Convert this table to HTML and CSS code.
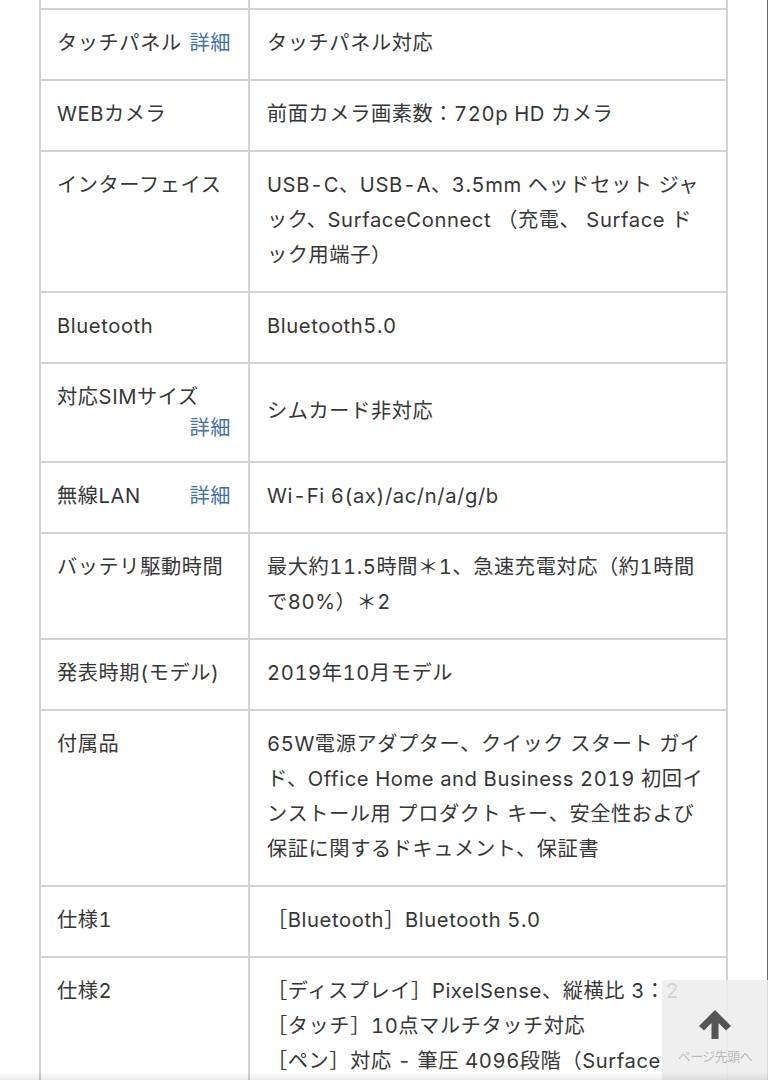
FILE: index.html
```html
<!DOCTYPE html>
<html lang="ja">
<head>
<meta charset="utf-8">
<title>スペック表</title>
<link rel="stylesheet" href="styles.css">
</head>
<body>
<div class="page">
  <table class="spec">
    <colgroup><col class="col-head"><col class="col-body"></colgroup>
    <tbody>
      <tr class="cut"><th></th><td></td></tr>
      <tr>
        <th><div class="label"><span>タッチパネル</span><a class="more" href="#">詳細</a></div></th>
        <td>タッチパネル対応</td>
      </tr>
      <tr>
        <th>WEBカメラ</th>
        <td>前面カメラ画素数：720p HD カメラ</td>
      </tr>
      <tr>
        <th>インターフェイス</th>
        <td>USB-C、USB-A、3.5mm ヘッドセット ジャック、SurfaceConnect （充電、 Surface ドック用端子）</td>
      </tr>
      <tr>
        <th>Bluetooth</th>
        <td>Bluetooth5.0</td>
      </tr>
      <tr>
        <th><div class="label"><span>対応SIMサイズ</span><a class="more wrap" href="#">詳細</a></div></th>
        <td>シムカード非対応</td>
      </tr>
      <tr>
        <th><div class="label"><span>無線LAN</span><a class="more" href="#">詳細</a></div></th>
        <td>Wi-Fi 6(ax)/ac/n/a/g/b</td>
      </tr>
      <tr>
        <th>バッテリ駆動時間</th>
        <td>最大約11.5時間＊1、急速充電対応（約1時間で80%）＊2</td>
      </tr>
      <tr>
        <th>発表時期(モデル)</th>
        <td>2019年10月モデル</td>
      </tr>
      <tr>
        <th>付属品</th>
        <td>65W電源アダプター、クイック スタート ガイド、Office Home and Business 2019 初回インストール用 プロダクト キー、安全性および保証に関するドキュメント、保証書</td>
      </tr>
      <tr>
        <th>仕様1</th>
        <td>［Bluetooth］Bluetooth 5.0</td>
      </tr>
      <tr>
        <th>仕様2</th>
        <td>［ディスプレイ］PixelSense、縦横比 3：2<br>［タッチ］10点マルチタッチ対応<br>［ペン］対応 - 筆圧 4096段階（Surface Pen 対応）<br>［カメラ］前面 720p HD カメラ</td>
      </tr>
    </tbody>
  </table>
</div>
<a class="pagetop" href="#">
  <svg class="pagetop-arrow" width="36" height="32" viewBox="0 0 36 32" aria-hidden="true">
    <path d="M18 2 L34 18 L29 22.5 L21.5 15 L21.5 31 L14.5 31 L14.5 15 L7 22.5 L2 18 Z" fill="#555"/>
  </svg>
  <span class="pagetop-text">ページ先頭へ</span>
</a>
<div class="bottom-shade"></div>
</body>
</html>
```

FILE: styles.css
```css
html, body {
  margin: 0;
  padding: 0;
  background: #fff;
}

body {
  font-family: Inter, "Noto Sans CJK JP", sans-serif;
  color: #363636;
  font-size: 20.2px;
  line-height: 35px;
}

.page {
  padding: 0 40px 0 39px;
  border-right: 1px solid #6a6a6a;
  min-height: 1080px;
  box-sizing: border-box;
}

.spec {
  width: 689px;
  border-collapse: separate;
  border-spacing: 0;
  border-left: 2px solid #d2d2d2;
  table-layout: fixed;
  letter-spacing: 0.6px;
  font-variant-numeric: tabular-nums;
}

.col-head {
  width: 209px;
}

.col-body {
  width: 478px;
}

.spec th,
.spec td {
  border-right: 2px solid #d2d2d2;
  border-bottom: 2px solid #d2d2d2;
  padding: 15px 17px 19px 16px;
  font-weight: normal;
  text-align: left;
}

.spec th {
  vertical-align: top;
}

.spec td {
  vertical-align: middle;
  padding-left: 17px;
  padding-right: 22px;
}

.spec tr.cut th,
.spec tr.cut td {
  padding: 0;
  height: 8px;
}

.label {
  display: flex;
  flex-wrap: wrap;
  justify-content: space-between;
}

.more {
  color: #3f70ad;
  text-decoration: none;
  margin-left: auto;
}

.more.wrap {
  line-height: 28px;
}

.pagetop {
  position: fixed;
  right: 0;
  bottom: 0;
  width: 106px;
  height: 100px;
  background: rgba(236, 236, 236, 0.86);
  display: flex;
  flex-direction: column;
  align-items: center;
  text-decoration: none;
}

.pagetop-arrow {
  margin-top: 28px;
}

.pagetop-text {
  margin-top: 8px;
  font-family: "Noto Sans CJK JP", sans-serif;
  font-size: 13px;
  line-height: 16px;
  color: #b9b9b9;
  letter-spacing: -0.5px;
}

.bottom-shade {
  position: fixed;
  left: 0;
  right: 0;
  bottom: 0;
  height: 8px;
  background: linear-gradient(to bottom, rgba(0,0,0,0), rgba(0,0,0,0.08));
  pointer-events: none;
}
```
